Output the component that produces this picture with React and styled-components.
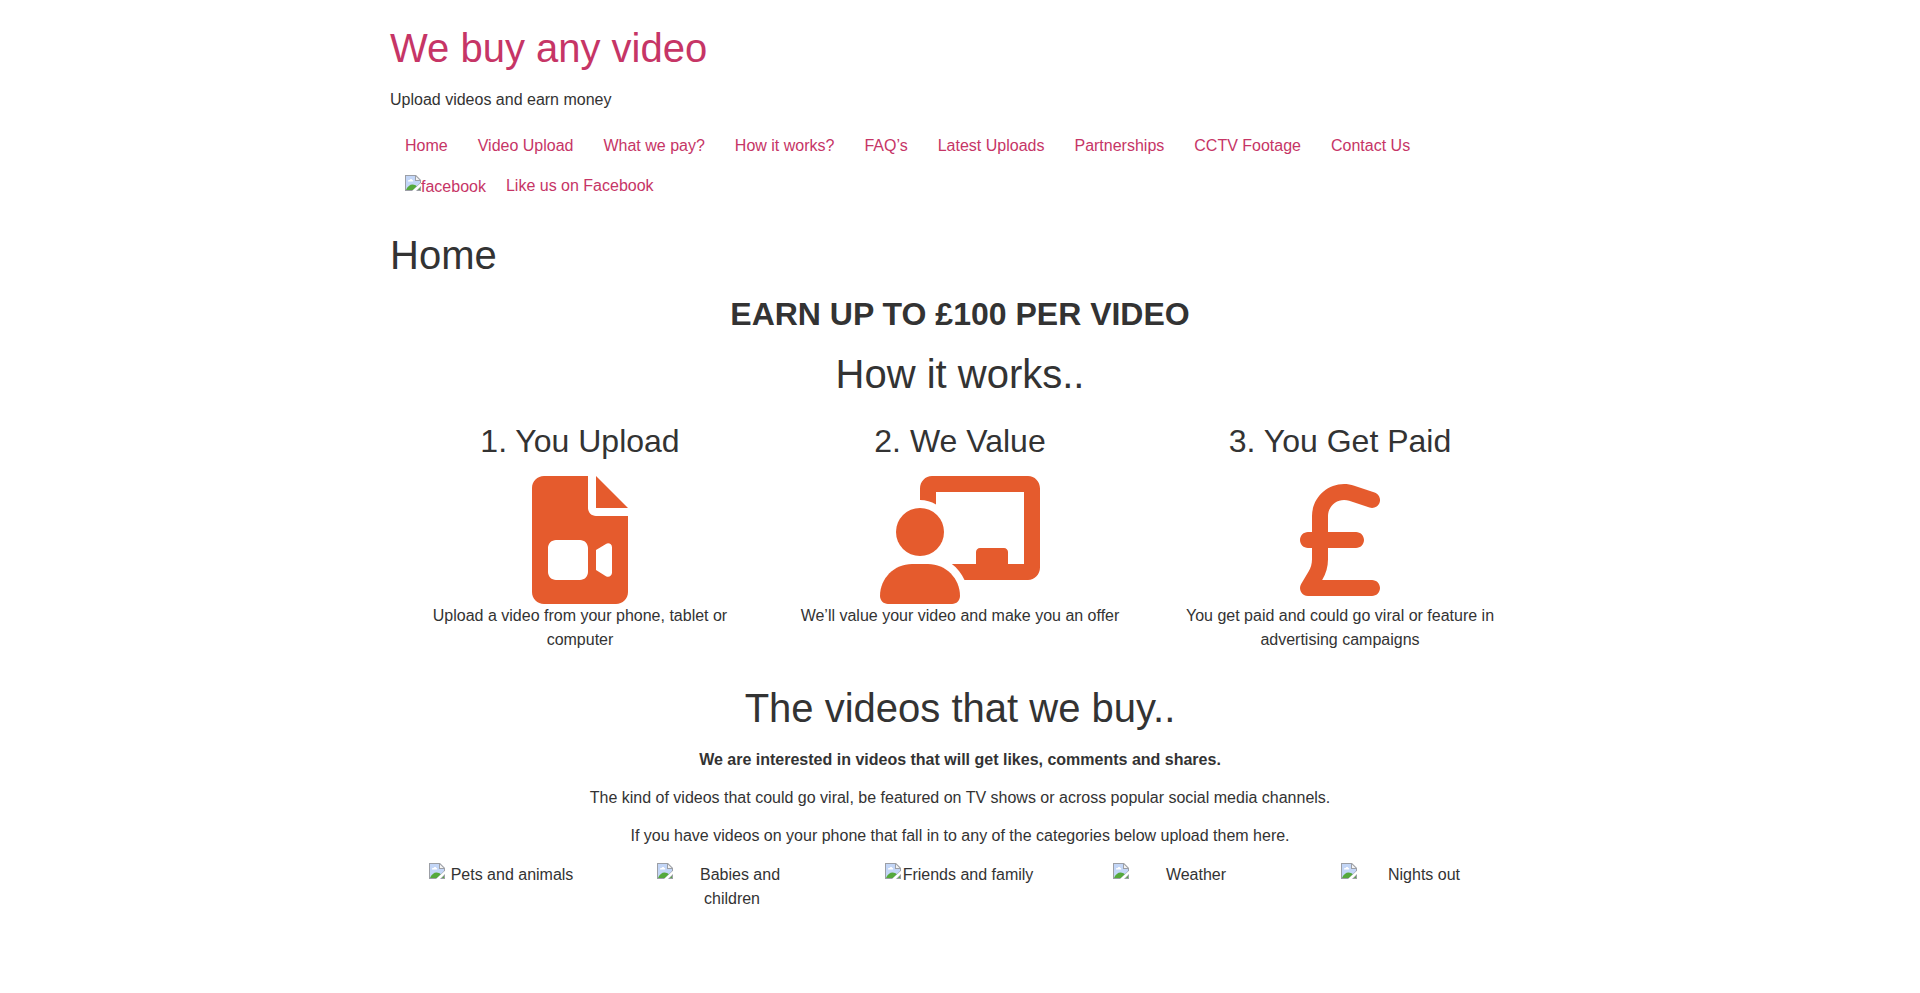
import styled, { createGlobalStyle } from "styled-components";
import { FaSterlingSign } from "react-icons/fa6";

const GlobalStyle = createGlobalStyle`
  *, *::before, *::after {
    box-sizing: border-box;
  }

  body {
    margin: 0;
    background-color: #ffffff;
    color: #333333;
    font-family: "Liberation Sans", Arial, sans-serif;
    font-size: 16px;
    line-height: 24px;
  }
`;

const Page = styled.div`
  max-width: 1140px;
  margin: 0 auto;
`;

const Header = styled.header`
  padding: 24px 0 16px;
`;

const Title = styled.h1`
  margin: 0 0 16px;
  font-size: 40px;
  font-weight: 500;
  line-height: 48px;
  text-align: ${(props) => (props.$center ? "center" : "left")};
`;

const Link = styled.a`
  color: #c63566;
  text-decoration: none;
`;

const Tagline = styled.p`
  margin: 0 0 14px;
`;

const Menu = styled.ul`
  display: flex;
  flex-wrap: wrap;
  margin: 0;
  padding: 0;
  list-style: none;
`;

const MenuLink = styled(Link)`
  display: flex;
  padding: 8px 15px;
`;

const MenuImage = styled.span`
  display: flex;
  align-items: flex-start;
  margin-right: 20px;
  padding-top: 1px;
`;

const Main = styled.main`
  padding-top: 8px;
`;

const Subtitle = styled.h2`
  margin: 0 0 16px;
  font-size: 32px;
  font-weight: 700;
  line-height: 39px;
  text-align: center;
`;

const Steps = styled.section`
  display: grid;
  grid-template-columns: repeat(3, 1fr);
  padding: 8px 0 32px;
`;

const Step = styled.article`
  padding: 0 30px;
  text-align: center;
`;

const StepTitle = styled.h3`
  margin: 0 0 15px;
  font-size: 32px;
  font-weight: 500;
  line-height: 39px;
`;

const StepIcon = styled.div`
  display: flex;
  justify-content: center;
  color: #e55b2d;

  svg {
    width: 160px;
    height: 128px;
  }
`;

const StepText = styled.p`
  margin: 0;
`;

const Paragraph = styled.p`
  margin: 0 0 14px;
  text-align: center;
`;

const Categories = styled.section`
  display: grid;
  grid-template-columns: repeat(5, 1fr);
  padding-top: 1px;
`;

const Category = styled.div`
  width: 150px;
  margin: 0 auto;
  text-align: center;
`;

const CategoryImage = styled.span`
  float: left;
  display: flex;
`;

const FileVideo = () => (
  <svg viewBox="0 0 384 512" fill="currentColor" aria-hidden="true">
    <path d="M256 0V128H384Z" />
    <path
      fillRule="evenodd"
      d="M224 0H48C21.5 0 0 21.5 0 48V464C0 490.5 21.5 512 48 512H336C362.5 512 384 490.5 384 464V160H256C238.3 160 224 145.7 224 128ZM96 256H192C209.7 256 224 270.3 224 288V384C224 401.7 209.7 416 192 416H96C78.3 416 64 401.7 64 384V288C64 270.3 78.3 256 96 256ZM320 284.9V387.2C320 399.8 306.3 407.3 295.8 400.5L256 376V296L295.8 271.6C306.3 264.8 320 272.3 320 284.9Z"
    />
  </svg>
);

const ChalkboardUser = () => (
  <svg viewBox="0 0 640 512" fill="currentColor" aria-hidden="true">
    <circle cx="160" cy="224" r="96" />
    <path d="M192 352H128C57.3 352 0 409.3 0 480C0 497.7 14.3 512 32 512H288C305.7 512 320 497.7 320 480C320 409.3 262.7 352 192 352Z" />
    <path d="M592 0H208C181.5 0 160 22.3 160 49.6V96C183.4 96 205.1 102.8 224 113.8V64H576V352H512V304C512 295.2 504.8 288 496 288H400C391.2 288 384 295.2 384 304V352H287.3C309.4 368.5 326.8 390.5 338.1 416H592C618.5 416 640 393.8 640 366.4V49.6C640 22.3 618.5 0 592 0Z" />
  </svg>
);

const BrokenImage = () => (
  <svg width="16" height="16" viewBox="0 0 16 16" aria-hidden="true">
    <path d="M0 0H11L16 5V8L8 16H0Z" fill="#9c9fa6" />
    <path d="M1 1H10V6H15V8L8 15H1Z" fill="#c3d6f7" />
    <path
      d="M3 6.5C2.6 5.3 3.8 4.6 4.6 5C5 3.6 7.1 3.7 7.3 5.1C8.4 5 8.6 6.5 7.8 6.5Z"
      fill="#ffffff"
    />
    <path d="M1 15C2.5 11.5 5 9.6 7.5 9.6C9.3 9.6 10.8 10.4 11.8 11.2L8 15Z" fill="#55a93c" />
    <path d="M11 1.5L14.5 5H11Z" fill="#f5f5f5" />
    <path d="M16 8V10.5L10.5 16H7Z" fill="#ffffff" />
    <path d="M16 11V16H11Z" fill="#9c9fa6" />
    <path d="M15 13V15H13Z" fill="#55a93c" />
  </svg>
);

const menu = [
  "Home",
  "Video Upload",
  "What we pay?",
  "How it works?",
  "FAQ’s",
  "Latest Uploads",
  "Partnerships",
  "CCTV Footage",
  "Contact Us",
];

const steps = [
  {
    title: "1. You Upload",
    icon: <FileVideo />,
    text: "Upload a video from your phone, tablet or computer",
  },
  {
    title: "2. We Value",
    icon: <ChalkboardUser />,
    text: "We’ll value your video and make you an offer",
  },
  {
    title: "3. You Get Paid",
    icon: <FaSterlingSign />,
    text: "You get paid and could go viral or feature in advertising campaigns",
  },
];

const categories = [
  "Pets and animals",
  "Babies and children",
  "Friends and family",
  "Weather",
  "Nights out",
];

const App = () => {
  return (
    <>
      <GlobalStyle />
      <Page>
        <Header>
          <Title>
            <Link href="#">We buy any video</Link>
          </Title>
          <Tagline>Upload videos and earn money</Tagline>
          <nav>
            <Menu>
              {menu.map((item) => (
                <li key={item}>
                  <MenuLink href="#">{item}</MenuLink>
                </li>
              ))}
              <li>
                <MenuLink href="#">
                  <MenuImage>
                    <BrokenImage />
                    facebook
                  </MenuImage>
                  Like us on Facebook
                </MenuLink>
              </li>
            </Menu>
          </nav>
        </Header>
        <Main>
          <Title>Home</Title>
          <Subtitle>EARN UP TO £100 PER VIDEO</Subtitle>
          <Title as="h2" $center>
            How it works..
          </Title>
          <Steps>
            {steps.map((step) => (
              <Step key={step.title}>
                <StepTitle>{step.title}</StepTitle>
                <StepIcon>{step.icon}</StepIcon>
                <StepText>{step.text}</StepText>
              </Step>
            ))}
          </Steps>
          <Title as="h2" $center>
            The videos that we buy..
          </Title>
          <Paragraph>
            <strong>
              We are interested in videos that will get likes, comments and
              shares.
            </strong>
          </Paragraph>
          <Paragraph>
            The kind of videos that could go viral, be featured on TV shows or
            across popular social media channels.
          </Paragraph>
          <Paragraph>
            If you have videos on your phone that fall in to any of the
            categories below upload them here.
          </Paragraph>
          <Categories>
            {categories.map((category) => (
              <Category key={category}>
                <CategoryImage>
                  <BrokenImage />
                </CategoryImage>
                {category}
              </Category>
            ))}
          </Categories>
        </Main>
      </Page>
    </>
  );
};

export default App;
